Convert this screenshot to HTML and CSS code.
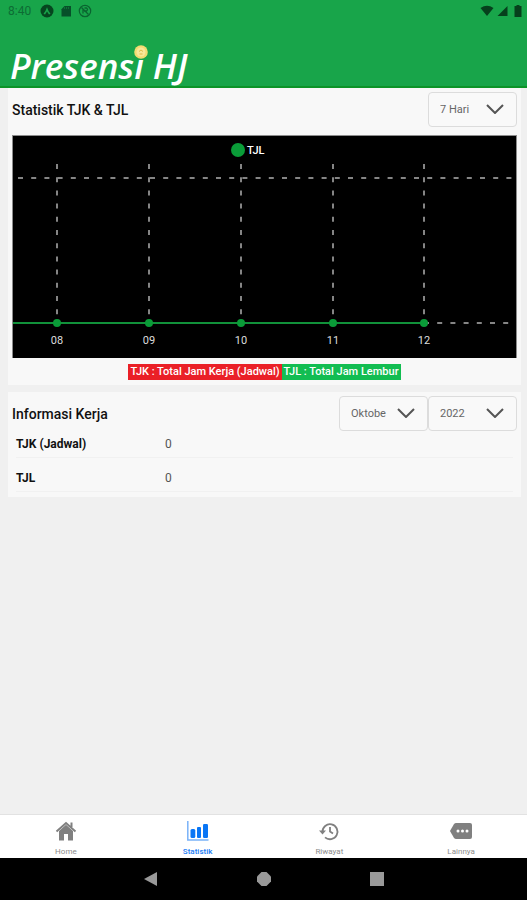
FILE: index.html
```html
<!DOCTYPE html>
<html lang="id">
<head>
<meta charset="utf-8">
<meta name="viewport" content="width=device-width, initial-scale=1">
<title>Presensi HJ</title>
<link rel="stylesheet" href="styles.css">
</head>
<body>
<header class="header">
  <div class="status">
    <div class="status-group">
      <span class="clock">8:40</span>
      <svg class="status-icon" viewBox="0 0 14 14"><circle cx="7" cy="7" r="6.500" fill="#06461f"/><path d="M3.500 9.800 Q6 6.500 7 3.200 Q8 6.500 10.500 9.800 L9 10.500 L7 7.500 L5 10.500Z" fill="#18a34a"/></svg>
      <svg class="status-icon" viewBox="0 0 14 14"><path d="M5.500 2H12V12.500H2.500V5.200Z" fill="#07502a"/><path d="M5.500 3v2M7.500 3v2M9.500 3v2" stroke="#127c3a" stroke-width=".8"/></svg>
      <svg class="status-icon" viewBox="0 0 14 14" fill="none" stroke="#0a6430"><circle cx="7" cy="7" r="5.700" stroke-width="1.200"/><path d="M3.500 3.500 10.500 10.500M5 9.500V5.500M6.500 4H8.500Q10.500 5.500 8.500 7H6" stroke-width="1.300"/></svg>
    </div>
    <div class="status-group signals">
      <svg class="wifi" viewBox="0 0 14 12"><path d="M0.500 3Q7-1.500 13.500 3L7 11Z" fill="#06401c"/></svg>
      <svg class="cell" viewBox="0 0 11 12"><path d="M10.500 1V11H.5Z" fill="#06401c"/></svg>
      <svg class="battery" viewBox="0 0 8 12"><path d="M2.500 0H5.500V1H7.500V12H.5V1H2.500Z" fill="#06401c"/></svg>
    </div>
  </div>
  <h1 class="logo">Presens<span class="logo-i">i<svg class="coin" viewBox="0 0 14 14"><circle cx="7" cy="7" r="6.800" fill="#f2db72"/><circle cx="7" cy="7" r="4.500" fill="#f8e89a"/><path d="M5 6.500 7 5 9 6.500M5.500 9H8.500" fill="none" stroke="#dfbc45"/></svg></span> HJ</h1>
</header>

<main class="main">
  <section class="card">
    <div class="card-head">
      <h2>Statistik TJK &amp; TJL</h2>
      <div class="picker">
        <select aria-label="Rentang hari"><option>7 Hari</option></select>
        <svg class="chevron" viewBox="0 0 18 10"><path d="M1 1 9 9 17 1"/></svg>
      </div>
    </div>
    <svg class="chart" viewBox="0 0 505 223" role="img" aria-label="Grafik TJL">
      <rect width="505" height="223" fill="#8c8c8c"/>
      <rect x="1" y="1" width="503" height="222" fill="#000"/>
      <g class="grid">
        <path d="M6 43H504M412 188H504"/>
        <path d="M45 29V184M137 29V184M229 29V184M321 29V184M412 29V184"/>
      </g>
      <path class="series" d="M1 188H412"/>
      <g class="series-dots"><circle cx="45" cy="188" r="4"/><circle cx="137" cy="188" r="4"/><circle cx="229" cy="188" r="4"/><circle cx="321" cy="188" r="4"/><circle cx="412" cy="188" r="4"/><circle cx="226" cy="15" r="7"/></g>
      <text class="key" x="235" y="19">TJL</text>
      <g class="axis"><text x="45" y="209">08</text><text x="137" y="209">09</text><text x="229" y="209">10</text><text x="321" y="209">11</text><text x="412" y="209">12</text></g>
    </svg>
    <div class="legend">
      <span class="tag tag-red">TJK : Total Jam Kerja (Jadwal)</span><span class="tag tag-green">TJL : Total Jam Lembur</span>
    </div>
  </section>

  <section class="card">
    <div class="card-head">
      <h2>Informasi Kerja</h2>
      <div class="pickers">
        <div class="picker">
          <select aria-label="Bulan"><option>Oktobe</option></select>
          <svg class="chevron" viewBox="0 0 18 10"><path d="M1 1 9 9 17 1"/></svg>
        </div>
        <div class="picker">
          <select aria-label="Tahun"><option>2022</option></select>
          <svg class="chevron" viewBox="0 0 18 10"><path d="M1 1 9 9 17 1"/></svg>
        </div>
      </div>
    </div>
    <div class="info-wrap">
      <table class="info">
        <tr><th scope="row">TJK (Jadwal)</th><td>0</td></tr>
        <tr><th scope="row">TJL</th><td>0</td></tr>
      </table>
    </div>
  </section>
</main>

<nav class="tabs">
  <a class="tab" href="#home">
    <svg viewBox="0 0 22 22" fill="#808080"><path d="M11 4.800 18 11V20.500H13V14H9V20.500H4V11Z"/><path d="M1.500 11.500 11 3 20.500 11.500M16.500 7V2.500" fill="none" stroke="#808080" stroke-width="2"/></svg>
    <span>Home</span>
  </a>
  <a class="tab active" href="#statistik" aria-current="page">
    <svg viewBox="0 0 22 22" fill="#0a76f5"><path d="M.8 1V20H21.500" fill="none" stroke="#7ab2f8" stroke-width="1.500"/><rect x="3.500" y="9" width="4.800" height="9" rx="1.500"/><rect x="10" y="7" width="4" height="11" rx="1"/><rect x="16" y="4" width="5" height="14" rx="1.200"/></svg>
    <span>Statistik</span>
  </a>
  <a class="tab" href="#riwayat">
    <svg viewBox="0 0 22 22" fill="none" stroke="#808080" stroke-width="1.800"><path d="M4.500 12A7.500 7.500 0 1 1 7 17.300M12 7V11.500L15 13.500"/><path d="M1 10.500H8L4.500 14.500Z" fill="#808080" stroke="none"/></svg>
    <span>Riwayat</span>
  </a>
  <a class="tab" href="#lainnya">
    <svg viewBox="0 0 22 22"><path d="M6 3H20Q22 3 22 5V17Q22 19 20 19H6Q5 19 4 18L0 11 4 4Q5 3 6 3Z" fill="#808080"/><g fill="#fff"><circle cx="8" cy="11" r="1.500"/><circle cx="12.500" cy="11" r="1.500"/><circle cx="17" cy="11" r="1.500"/></g></svg>
    <span>Lainnya</span>
  </a>
</nav>
<div class="system">
  <button type="button" aria-label="Kembali"><svg viewBox="0 0 14 14"><path d="M0 7 13 0V14Z"/></svg></button>
  <button type="button" aria-label="Beranda"><svg viewBox="0 0 14 14"><path d="M4.500 0H9.500L14 4.500V9.500L9.500 14H4.500L0 9.500V4.500Z"/></svg></button>
  <button type="button" aria-label="Aplikasi terbaru"><svg viewBox="0 0 14 14"><path d="M0 0H14V14H0Z"/></svg></button>
</div>
</body>
</html>
```

FILE: styles.css
```css
* { box-sizing: border-box; }
body {
  margin: 0;
  min-height: 100vh;
  display: flex;
  flex-direction: column;
  background: #f0f0f0;
  color: #111;
  font-family: Roboto, "Liberation Sans", sans-serif;
}
h1, h2 { margin: 0; }
svg { display: block; }

.header {
  background: #18a54a;
  border-bottom: 2px solid #0c9428;
}
.status {
  display: flex;
  justify-content: space-between;
  align-items: center;
  height: 22px;
  padding: 0 5px 0 8px;
}
.status-group { display: flex; align-items: center; gap: 5px; }
.signals { gap: 3px; }
.clock { width: 27px; font-size: 12px; color: #0d6c34; }
.status-icon { width: 14px; height: 14px; }
.wifi { width: 14px; height: 12px; }
.cell { width: 11px; height: 12px; }
.battery { width: 8px; height: 12px; margin-left: 3px; }
.logo {
  padding: 24px 10px 0;
  font: italic 600 35px/40px "Open Sans", sans-serif;
  color: #fff;
}
.logo-i { position: relative; }
.coin { position: absolute; top: 3px; left: 0; width: 14px; height: 14px; }

.main { flex: 1; padding: 0 6px 0 8px; }
.card {
  background: #f8f8f8;
  padding: 4px 4px 5px;
  margin-bottom: 7px;
}
.card-head {
  display: flex;
  justify-content: space-between;
  align-items: center;
}
h2 { font-size: 14px; font-weight: 500; line-height: 20px; }
.pickers { display: flex; }
.picker { position: relative; width: 89px; }
.picker select {
  appearance: none;
  display: block;
  width: 100%;
  height: 35px;
  padding: 0 34px 0 11px;
  border: 1px solid #dcdcdc;
  border-radius: 4px;
  background: #f9f9f9;
  color: #666;
  font: 11px Roboto, sans-serif;
}
.chevron {
  position: absolute;
  right: 13px;
  top: 12px;
  width: 18px;
  height: 10px;
  fill: none;
  stroke: #555;
  stroke-width: 2;
  pointer-events: none;
}
.chart { width: 100%; margin-top: 8px; }
.grid path { fill: none; stroke: #858585; stroke-width: 2; stroke-dasharray: 5 8.200; }
.series { stroke: #11913a; stroke-width: 2; }
.series-dots { fill: #0a9c38; }
.key { fill: #fff; font-size: 11px; font-weight: 500; }
.axis { fill: #ddd; font-size: 11px; text-anchor: middle; }
.legend { display: flex; justify-content: center; margin-top: 6px; }
.tag {
  padding: 0 2px;
  color: #fff;
  font-size: 11px;
  font-weight: 500;
  line-height: 16px;
}
.tag-red { background: #ea2027; }
.tag-green { background: #12bd52; }

.info-wrap { padding: 0 4px; }
.info { width: 100%; border-collapse: collapse; table-layout: fixed; }
.info th, .info td {
  padding: 12px 0 5px;
  border-bottom: 1px solid #f1f1f1;
  font-size: 12px;
  line-height: 16px;
  text-align: left;
}
.info tr:first-child > * { padding-top: 5px; }
.info th { width: 149px; font-weight: 700; }
.info td { color: #555; }

.tabs {
  display: flex;
  height: 44px;
  background: #fff;
  border-top: 1px solid #e2e2e2;
}
.tab {
  flex: 1;
  display: flex;
  flex-direction: column;
  align-items: center;
  padding-top: 5px;
  gap: 5px;
  color: #8c8c8c;
  font-size: 8px;
  line-height: 10px;
  text-decoration: none;
}
.tab svg { width: 22px; height: 22px; }
.active { color: #1a7cf5; font-weight: 500; }
.system {
  display: flex;
  justify-content: center;
  gap: 85px;
  align-items: center;
  height: 42px;
  background: #000;
}
.system button { padding: 7px; border: 0; background: none; }
.system svg { width: 14px; height: 14px; fill: #999; }
```
